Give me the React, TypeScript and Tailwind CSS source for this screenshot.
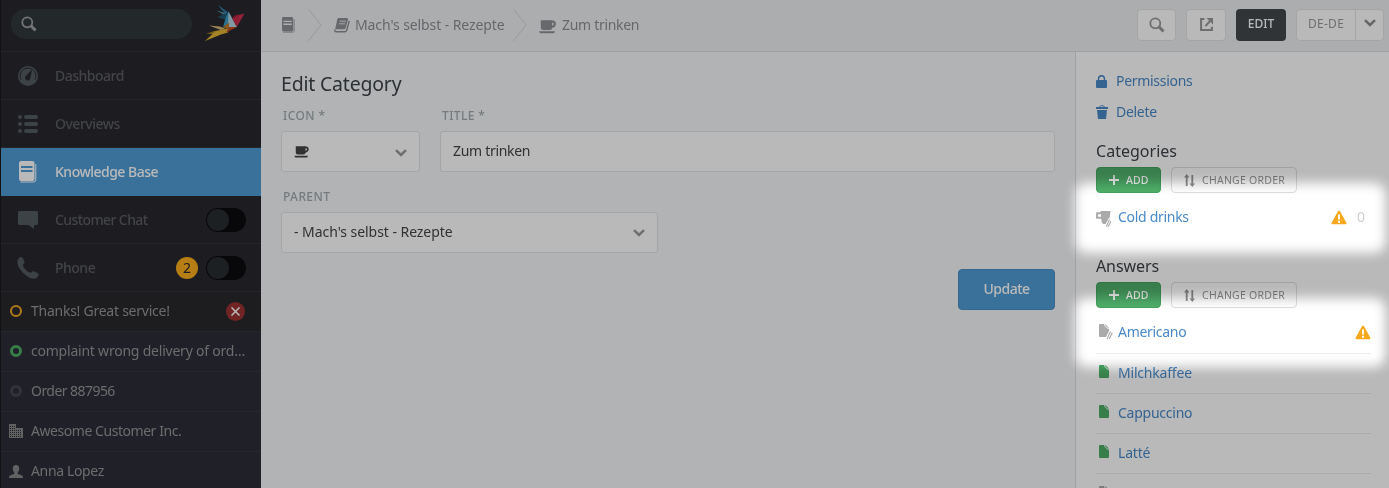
import React from "react";

type P = { className?: string };

const Magnifier = ({ className }: P) => (
  <svg viewBox="0 0 16 16" className={className} fill="none" stroke="currentColor">
    <circle cx="6.3" cy="6.3" r="5" strokeWidth="1.8" />
    <path d="M10 10l4.600 4.400" strokeWidth="3" />
  </svg>
);

const Chevron = ({ className }: P) => (
  <svg viewBox="0 0 12 8" className={className} fill="none" stroke="currentColor" strokeWidth="2.500">
    <path d="M1 1.200l5 4.800 5-4.800" />
  </svg>
);

const Cup = ({ className }: P) => (
  <svg viewBox="0 0 17 14" className={className}>
    <path d="M1.800 0.300h11.400v7.200q0 2.500-2.300 2.500H4.100Q1.800 10 1.800 7.500z" fill="currentColor" />
    <path d="M12 1.500h1.600q2.300.2 2.300 2.400 0 2.500-3.400 3" fill="none" stroke="currentColor" strokeWidth="2" />
    <path d="M0 11.300h16.200l-1.200 2H1.200z" fill="currentColor" />
  </svg>
);

const Book = ({ className }: P) => (
  <svg viewBox="0 0 18 22" className={className} fill="currentColor">
    <path fillRule="evenodd" d="M2 0h11.500a2 2 0 0 1 2 2v16a2 2 0 0 1-2 2H2a2 2 0 0 1-2-2V2a2 2 0 0 1 2-2zM2 5v2h11.500V5zM2 9v2h11.500V9z" />
    <path d="M16.800 3v15.500a2.300 2.300 0 0 1-2.300 2.500H1.500" fill="none" stroke="currentColor" strokeWidth="1" />
  </svg>
);

const SlantBook = ({ className }: P) => (
  <svg viewBox="0 0 16 15" className={className}>
    <path d="M4.800 0h8q1.600 0 1.200 1.500l-2.300 8.300q-.4 1.400-1.800 1.400H1.200L3.300 1.200Q3.700 0 4.800 0z" fill="currentColor" />
    <path d="M5.800 3.200h6.200M5 5.800h6.200" stroke="#edeff1" strokeWidth="0.900" />
    <path d="M15.200 3L12.700 12.200q-.4 1.600-2 1.600H2.200Q.5 13.800.8 11.500" fill="none" stroke="currentColor" strokeWidth="1.400" />
  </svg>
);

const Gauge = ({ className }: P) => (
  <svg viewBox="0 0 20 20" className={className}>
    <circle cx="10" cy="10" r="10" fill="currentColor" />
    <path d="M3.100 13.500a7.800 7.800 0 1 1 13.800 0" fill="none" stroke="#28272d" strokeWidth="1" />
    <path d="M14.200 3.300l-1.900 9.100a2.700 2.700 0 1 1-4.600-2.400z" fill="#28272d" />
  </svg>
);

const ListIcon = ({ className }: P) => (
  <svg viewBox="0 0 20 18" className={className} fill="currentColor">
    <circle cx="2" cy="2" r="2" />
    <circle cx="2" cy="9" r="2" />
    <circle cx="2" cy="16" r="2" />
    <rect x="6" width="14" height="4" rx="2" />
    <rect x="6" y="7" width="14" height="4" rx="2" />
    <rect x="6" y="14" width="14" height="4" rx="2" />
  </svg>
);

const Speech = ({ className }: P) => (
  <svg viewBox="0 0 20 18" className={className} fill="currentColor">
    <path d="M1.500 0h17A1.500 1.500 0 0 1 20 1.500v11a1.500 1.500 0 0 1-1.500 1.500H16v4l-5.500-4h-9A1.500 1.500 0 0 1 0 12.500v-11A1.500 1.500 0 0 1 1.500 0z" />
  </svg>
);

const Handset = ({ className }: P) => (
  <svg viewBox="0 0 22 22" className={className} fill="currentColor">
    <path d="M1.500 1.500C3-.2 5-.3 5.700 1l1.800 3.700c.4 1-.1 1.800-1.500 2.800-.3 3.500 5 8.500 8.300 8.300 1-1.500 1.900-1.800 2.900-1.300l3.600 1.800c1.300.8 1 2.600-.6 4.200-2 1.700-5.500 1.600-9.700-1.100C6.500 16.600 3.500 13.500 1.500 9.500 0 6.300 0 3.200 1.500 1.500z" />
  </svg>
);

const Bird = () => (
  <svg viewBox="204 3 42 40" className="h-10 w-[42px]">
    <path d="M218 5l11 8-1 3-7-7z" fill="#2f7fa8" />
    <path d="M216.500 10.500l11 3 .5 4z" fill="#4d93ad" />
    <path d="M217.500 17l8-3.500 3.500-2-2 9z" fill="#1c5570" />
    <path d="M229 11.500l-3 5-3 11 6-4z" fill="#3b9dc6" />
    <path d="M228.500 11.500l8.500 15.500-9 .5z" fill="#b3d3df" />
    <path d="M232 18l4-3.500 4 .5-4 9z" fill="#9b2035" />
    <path d="M244.500 13.500l-6 1.500-3.500 6.500 2 5z" fill="#c9304f" />
    <path d="M232.500 18.500l7-3.500-3.300 11z" fill="#c92744" />
    <path d="M209 25.500l11 1 5 2-3 2z" fill="#d3b878" />
    <path d="M206 34l8-3 12-2-10 5z" fill="#a47f23" />
    <path d="M205 41l10-9.500 14-3.500-1 4.500-7 2z" fill="#e0b532" />
    <path d="M223 27.500l6-5v5l-2 1z" fill="#c77923" />
    <path d="M229 27l8 0-11 5.500z" fill="#c24b25" />
  </svg>
);

const Building = ({ className }: P) => (
  <svg viewBox="0 0 14 14" className={className}>
    <path d="M0 0h7v4h7v10H0z" fill="currentColor" />
    <path d="M1 2.500h5M1 4.500h5M1 6.500h12M1 8.500h12M1 10.500h12M1 12.500h12" stroke="#2b2b36" strokeDasharray="1 1" />
  </svg>
);

const Person = ({ className }: P) => (
  <svg viewBox="0 0 14 13" className={className} fill="currentColor">
    <path d="M7 0c2.200 0 3.200 1.300 3.200 3.500 0 1.900-.6 3.200-1.500 4v1.300l4.300 1.700c.7.3 1 1 1 2.500H0c0-1.500.3-2.200 1-2.500l4.300-1.700V7.500c-.9-.8-1.500-2.100-1.500-4C3.800 1.300 4.800 0 7 0z" />
  </svg>
);

const External = ({ className }: P) => (
  <svg viewBox="0 0 12 12" className={className} fill="none" stroke="currentColor" strokeWidth="1.900">
    <path d="M4 1H1v10h10V8M5 7.500l4.500-5" />
    <path d="M6 0h6v6z" fill="currentColor" stroke="none" />
  </svg>
);

const Lock = ({ className }: P) => (
  <svg viewBox="0 0 11 13" className={className}>
    <rect y="5" width="11" height="8" rx="1" fill="currentColor" />
    <path d="M2.500 6V4a3 3.200 0 0 1 6 0v2" fill="none" stroke="currentColor" strokeWidth="1.400" />
  </svg>
);

const Trash = ({ className }: P) => (
  <svg viewBox="0 0 12 14" className={className} fill="currentColor">
    <path d="M0 2h12v2H0zM1 5h10l-1 9H2z" />
    <path d="M3.500 2.500C3.500 0 8.500 0 8.500 2.500" fill="none" stroke="currentColor" />
  </svg>
);

const Warning = ({ className }: P) => (
  <svg viewBox="0 0 16 15" className={className}>
    <path d="M8 1.500L14.500 13.200h-13z" fill="#f5a91f" stroke="#f5a91f" strokeWidth="2" strokeLinejoin="round" />
    <path d="M8 4.500v5M8 10.800v2" stroke="#fff" strokeWidth="2" />
  </svg>
);

const DraftCup = ({ className }: P) => (
  <svg viewBox="0 0 15 17" className={className}>
    <path d="M4.500 0h10l-1 7.500L9.500 13H8q-2 0-2.500-3z" fill="#aaa" />
    <path d="M6 2.200H1.100v4.500H6" fill="none" stroke="#aaa" strokeWidth="2" />
    <path d="M14 7.500L10 15.500M15.500 9.500L12 16.500" stroke="#fff" strokeWidth="2.600" />
    <path d="M13.500 8.500L10.300 15.500M15 10L12 16" stroke="#aaa" strokeWidth="1.100" />
  </svg>
);

const Page = ({ className }: P) => (
  <svg viewBox="0 0 10 13" className={className} fill="currentColor">
    <path d="M1 0h4.300v1.500L8.700 4.700H10V12q0 1-1 1H1q-1 0-1-1V1q0-1 1-1z" />
    <path d="M6.300 0L10 3.800H8.700L6.300 1.500z" />
  </svg>
);

const DraftPage = ({ className }: P) => (
  <svg viewBox="0 0 14 16" className={className}>
    <path d="M1 0h4.300v1.500L8.700 4.700H10V7L7 13H1q-1 0-1-1V1q0-1 1-1zM6.300 0L10 3.800H8.700L6.300 1.500z" fill="#aaa" />
    <path d="M11.500 7.500L8 15M13.300 8.500L10.300 15" stroke="#aaa" strokeWidth="1.100" />
  </svg>
);

const Arrows = ({ className }: P) => (
  <svg viewBox="0 0 11 13" className={className}>
    <path d="M2.700 12V2M8.300 1v9" stroke="currentColor" strokeWidth="1.800" />
    <path d="M0 3.500L2.700 0l2.700 3.500zM5.600 9.500L8.300 13 11 9.500z" fill="currentColor" />
  </svg>
);

const Separator = () => (
  <svg viewBox="0 0 14 34" className="h-[34px] w-3.5 shrink-0" fill="none" stroke="#d3d4d6">
    <path d="M.5 1l12.500 16L.5 33" />
  </svg>
);

const Toggle = () => (
  <span className="flex h-6 w-10 items-center rounded-full bg-[#0a0a0e] pl-px">
    <span className="size-[22px] rounded-full bg-[#282b30]" />
  </span>
);

const NavItem = ({ icon, label, active, children }: { icon: React.ReactNode; label: React.ReactNode; active?: boolean; children?: React.ReactNode }) => (
  <div className={active ? "flex h-12 shrink-0 items-center bg-[#4f9cd6] pr-[15px] text-white" : "flex h-12 shrink-0 items-center border-b border-[#333338] pr-[15px] text-[#5a5d62]"}>
    <span className="flex w-[54px] items-center justify-center text-[#525b60]">{icon}</span>
    <span className="flex-1 font-medium">{label}</span>
    {children}
  </div>
);

const Task = ({ icon, label, hot }: { icon: React.ReactNode; label: React.ReactNode; hot?: boolean }) => (
  <div className={hot ? "flex h-10 shrink-0 items-center border-b border-[#34353a] bg-[#27282c]" : "flex h-10 shrink-0 items-center border-b border-[#34353a] bg-[#2b2b36]"}>
    <span className="flex w-[30px] justify-center pb-px text-[#858585]">{icon}</span>
    <span className="flex-1 whitespace-nowrap pb-px text-[#959595]">{label}</span>
    {hot && (
      <span className="mr-4 flex size-[19px] items-center justify-center rounded-full bg-[#9a3130]">
        <svg viewBox="0 0 10 10" className="size-[9px]" stroke="#fff" strokeWidth="1.700">
          <path d="M.5.5l9 9M9.500.5l-9 9" />
        </svg>
      </span>
    )}
  </div>
);

const Actions = () => (
  <div className="flex gap-2.5">
    <div className="flex h-[26px] w-[65px] items-center rounded-[4px] border border-[#45a05e] bg-[#4eae69] pl-3 text-[10.5px] font-medium text-white">
      <svg viewBox="0 0 10 10" className="mr-2 size-2.5" stroke="#fff" strokeWidth="1.800">
        <path d="M5 0v10M0 5h10" />
      </svg>
      <span className="-ml-px pb-px tracking-[0.1px]">ADD</span>
    </div>
    <div className="flex h-[26px] w-[126px] items-center rounded-[4px] border border-[#dedede] pl-3 text-[10.5px] text-[#8f8f8f]">
      <Arrows className="mr-[7px] h-[13px] w-[11px]" />
      <span className="whitespace-nowrap pb-px tracking-[0.25px]">CHANGE ORDER</span>
    </div>
  </div>
);

const Answer = ({ label }: { label: React.ReactNode }) => (
  <div className="flex h-10 shrink-0 items-center border-b border-[#ececec] pl-[3px]">
    <Page className="mr-[9px] -mt-1 h-[13px] w-2.5 text-[#4cad67]" />
    <span className="pb-0.5">{label}</span>
  </div>
);

export default function App() {
  return (
    <div className="relative flex h-[488px] w-[1389px] overflow-hidden bg-[#f6f7f9] font-['Noto_Sans',sans-serif] text-[14px] leading-5 text-[#444]">
      <aside className="flex w-[261px] shrink-0 flex-col overflow-hidden border-l border-[#18181b] bg-[#28272d]">
        <div className="flex h-[52px] shrink-0 items-start border-b border-[#333338] pl-2.5">
          <div className="mt-[9px] flex h-[30px] w-[181px] items-center rounded-full bg-[#30373b] pl-2.5">
            <Magnifier className="size-4 text-[#a0a0a0]" />
          </div>
          <div className="ml-3 mt-[3px]"><Bird /></div>
        </div>
        <NavItem icon={<Gauge className="size-5" />} label={<span className="tracking-[-0.5px]">Dashboard</span>} />
        <NavItem icon={<ListIcon className="h-[18px] w-5" />} label={<span className="tracking-[-0.5px]">Overviews</span>} />
        <NavItem active icon={<Book className="h-[22px] w-[18px] text-white" />} label={<span className="tracking-[-0.5px]">Knowledge Base</span>} />
        <NavItem icon={<Speech className="h-[18px] w-5" />} label={<span className="tracking-[-0.6px]">Customer Chat</span>}><Toggle /></NavItem>
        <NavItem icon={<Handset className="size-[22px]" />} label={<span className="tracking-[-0.5px]">Phone</span>}>
          <span className="mr-2 flex size-[22px] items-center justify-center rounded-full bg-[#fbad1d] text-[#28272d]">2</span>
          <Toggle />
        </NavItem>
        <Task hot icon={<span className="size-3 rounded-full border-[2.8px] border-[#f5a91f]" />} label={<span className="tracking-[-0.25px]">Thanks! Great service!</span>} />
        <Task icon={<span className="size-3 rounded-full border-[3px] border-[#4cad67]" />} label={<span className="tracking-[-0.22px]">complaint wrong delivery of ord…</span>} />
        <Task icon={<span className="size-3 rounded-full border-[3px] border-[#45464c]" />} label={<span className="tracking-[-0.55px]">Order 887956</span>} />
        <Task icon={<Building className="size-3.5" />} label={<span className="tracking-[-0.45px]">Awesome Customer Inc.</span>} />
        <Task icon={<Person className="h-[13px] w-3.5" />} label={<span className="tracking-[-0.35px]">Anna Lopez</span>} />
      </aside>

      <div className="flex min-w-0 flex-1 flex-col">
        <header className="flex h-[52px] shrink-0 items-center border-b border-[#dddee0] bg-[#edeff1] pr-[5px] text-[#8c8f93]">
          <div className="flex flex-1 items-center pb-px pl-[21px]">
            <Book className="mr-[13px] h-4 w-[13px]" />
            <Separator />
            <SlantBook className="ml-3 mr-[5px] h-[15px] w-4" />
            <span className="w-[158px] whitespace-nowrap pb-px tracking-[-0.1px]">Mach's selbst - Rezepte</span>
            <Separator />
            <Cup className="ml-3 mr-1.5 mt-1 h-3.5 w-[17px]" />
            <span className="whitespace-nowrap pb-px tracking-[-0.3px]">Zum trinken</span>
          </div>
          <div className="-mt-0.5 flex h-8 gap-2.5 text-[13px]">
            <div className="flex w-[39px] items-center justify-center rounded-[4px] border border-[#e2e3e5] bg-white"><Magnifier className="size-4 text-[#999]" /></div>
            <div className="flex w-10 items-center justify-center rounded-[4px] border border-[#e2e3e5] bg-white"><External className="size-[13px] text-[#999]" /></div>
            <div className="flex w-[50px] items-center justify-center rounded-[4px] bg-[#42474b] pb-px text-[12px] font-medium text-white">EDIT</div>
            <div className="flex w-[88px] rounded-[4px] border border-[#e2e3e5] bg-white">
              <span className="flex flex-1 items-center justify-center pb-px text-[12px] tracking-[0.3px] text-[#999]">DE-DE</span>
              <span className="flex w-7 items-center justify-center border-l border-[#e2e3e5]"><Chevron className="-mt-1 h-2 w-3 text-[#8c8c8c]" /></span>
            </div>
          </div>
        </header>

        <div className="flex min-h-0 flex-1">
          <main className="flex flex-1 flex-col px-5 pt-[18px]">
            <h1 className="text-[19.500px] leading-7 text-[#3d4247]"><span className="tracking-[-0.2px]">Edit Category</span></h1>
            <div className="mt-2 flex gap-5">
              <div className="w-[139px]">
                <div className="h-[25px] pl-0.5 text-[12px] font-medium leading-5 tracking-[0.4px] text-[#a0a9ad]">ICON *</div>
                <div className="flex h-[41px] items-center justify-between rounded-[3px] border border-[#e2e3e5] bg-white px-3">
                  <Cup className="h-3 w-[15px] text-[#444]" />
                  <Chevron className="mt-0.5 h-2 w-3 text-[#999]" />
                </div>
              </div>
              <div className="flex-1">
                <div className="h-[25px] pl-0.5 text-[12px] font-medium leading-5 tracking-[0.4px] text-[#a0a9ad]">TITLE *</div>
                <div className="flex h-[41px] items-center rounded-[3px] border border-[#e2e3e5] bg-white px-3"><span className="pb-0.5 tracking-[-0.3px]">Zum trinken</span></div>
              </div>
            </div>
            <div className="mt-[15px] h-[25px] pl-0.5 text-[12px] font-medium leading-5 tracking-[0.4px] text-[#a0a9ad]">PARENT</div>
            <div className="flex h-[41px] w-[377px] items-center justify-between rounded-[3px] border border-[#e2e3e5] bg-white px-3">
              <span className="pb-0.5 tracking-[-0.05px]">- Mach's selbst - Rezepte</span>
              <Chevron className="h-2 w-3 text-[#999]" />
            </div>
            <div className="mt-4 flex h-[41px] w-[97px] items-center justify-center self-end rounded-[4px] border border-[#488fc4] bg-[#4f9cd6] pb-0.5 font-medium tracking-[-0.5px] text-white">Update</div>
          </main>

          <aside className="flex w-[314px] shrink-0 flex-col overflow-hidden border-l border-[#dddee0] bg-white pl-5 pr-[18px] text-[#4889c7]">
            <div className="mt-[19px] flex h-5 shrink-0 items-center"><Lock className="mr-[9px] h-[13px] w-[11px]" /><span className="tracking-[-0.3px]">Permissions</span></div>
            <div className="mt-[11px] flex h-5 shrink-0 items-center"><Trash className="mr-2 h-3.5 w-3" /><span className="tracking-[-0.3px]">Delete</span></div>
            <h2 className="mt-[17px] h-[26px] shrink-0 text-[16px] leading-6 text-[#3d4247]"><span className="tracking-[0.02px]">Categories</span></h2>
            <div className="mt-0.5 shrink-0"><Actions /></div>
            <div className="mt-[14px] flex h-5 shrink-0 items-center">
              <DraftCup className="mr-[7px] mt-1 h-[17px] w-[15px]" />
              <span className="flex-1 tracking-[-0.3px]">Cold drinks</span>
              <Warning className="mr-2.5 h-[15px] w-4" />
              <span className="mr-1.5 text-[#ccd0d3]">0</span>
            </div>
            <h2 className="mt-[27px] h-[26px] shrink-0 text-[16px] leading-6 text-[#3d4247]"><span className="tracking-[-0.1px]">Answers</span></h2>
            <div className="mt-[2px] shrink-0"><Actions /></div>
            <div className="mt-1 flex h-[42px] shrink-0 items-center border-b border-[#ececec] pb-px pl-[3px]">
              <DraftPage className="mr-[5px] h-4 w-3.5" />
              <span className="flex-1 tracking-[-0.3px]">Americano</span>
              <Warning className="h-[15px] w-4" />
            </div>
            <Answer label={<span className="tracking-[-0.2px]">Milchkaffee</span>} />
            <Answer label={<span className="tracking-[-0.25px]">Cappuccino</span>} />
            <Answer label={<span className="tracking-[-0.2px]">Latté</span>} />
            <div className="flex h-10 shrink-0 items-center pl-[3px]">
              <Page className="mr-[9px] -mt-1 h-[13px] w-2.5 text-[#aaa]" />
              <span className="pb-px tracking-[-0.2px]">Espresso Macchiato</span>
            </div>
          </aside>
        </div>
      </div>

      <div className="pointer-events-none absolute inset-0 overflow-hidden bg-[#b9b9b9] mix-blend-multiply">
        <div className="absolute left-[1075px] top-[183px] h-[70px] w-[311px] rounded-[12px] bg-white blur-[6px]" />
        <div className="absolute left-[1075px] top-[298px] h-[69px] w-[311px] rounded-[12px] bg-white blur-[6px]" />
      </div>
    </div>
  );
}
